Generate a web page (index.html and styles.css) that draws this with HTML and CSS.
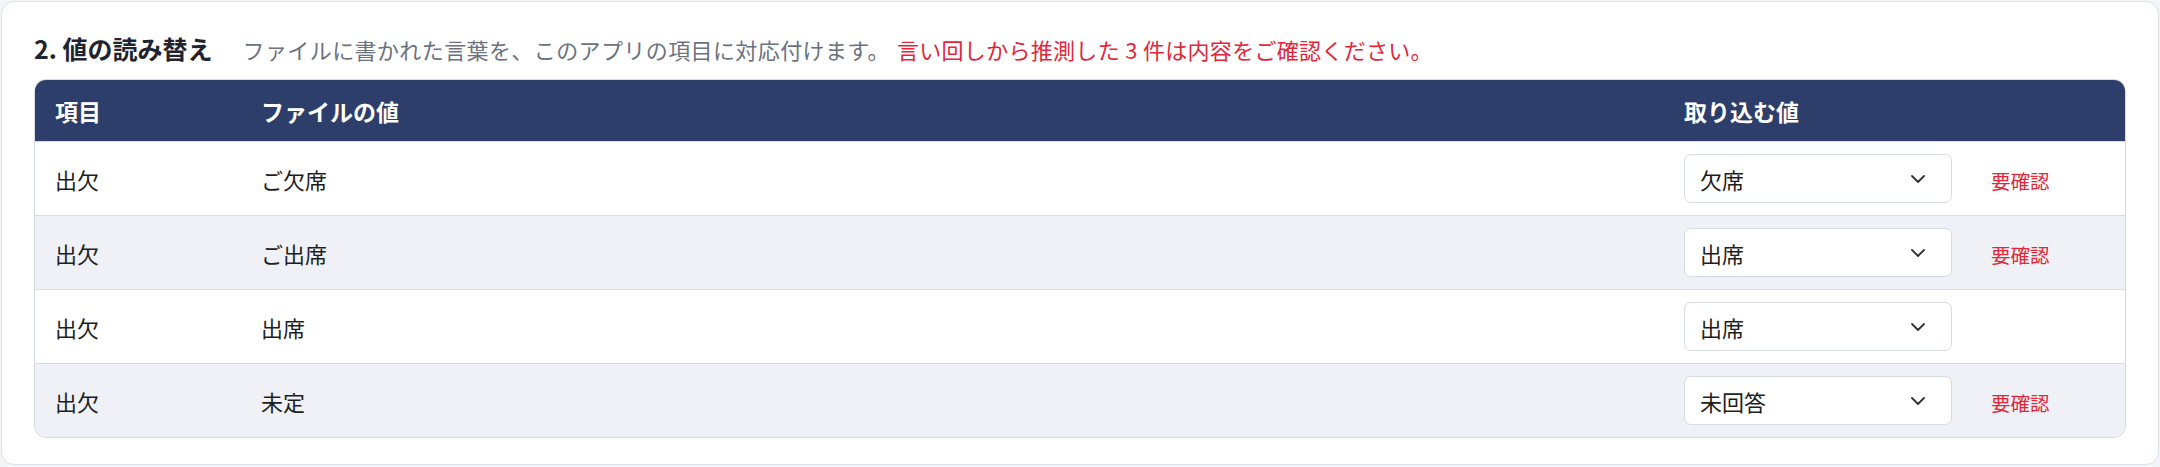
FILE: index.html
```html
<!DOCTYPE html>
<html lang="ja">
<head>
<meta charset="utf-8">
<link rel="stylesheet" href="styles.css">
</head>
<body>
<section class="card">
  <div class="heading">
    <h2 class="title">2. 値の読み替え</h2>
    <p class="desc">ファイルに書かれた言葉を、このアプリの項目に対応付けます。</p>
    <p class="warn">言い回しから推測した 3 件は内容をご確認ください。</p>
  </div>
  <div class="table">
    <div class="row head">
      <div class="cell">項目</div>
      <div class="cell">ファイルの値</div>
      <div class="cell">取り込む値</div>
      <div class="cell"></div>
    </div>
    <div class="row">
      <div class="cell">出欠</div>
      <div class="cell">ご欠席</div>
      <div class="cell"><div class="select"><span>欠席</span><svg class="chev" width="14" height="8" viewBox="0 0 14 8"><path d="M1 1l6 6 6-6" fill="none" stroke="#333" stroke-width="1.8" stroke-linecap="round" stroke-linejoin="round"/></svg></div></div>
      <div class="cell"><span class="tag">要確認</span></div>
    </div>
    <div class="row alt">
      <div class="cell">出欠</div>
      <div class="cell">ご出席</div>
      <div class="cell"><div class="select"><span>出席</span><svg class="chev" width="14" height="8" viewBox="0 0 14 8"><path d="M1 1l6 6 6-6" fill="none" stroke="#333" stroke-width="1.8" stroke-linecap="round" stroke-linejoin="round"/></svg></div></div>
      <div class="cell"><span class="tag">要確認</span></div>
    </div>
    <div class="row">
      <div class="cell">出欠</div>
      <div class="cell">出席</div>
      <div class="cell"><div class="select"><span>出席</span><svg class="chev" width="14" height="8" viewBox="0 0 14 8"><path d="M1 1l6 6 6-6" fill="none" stroke="#333" stroke-width="1.8" stroke-linecap="round" stroke-linejoin="round"/></svg></div></div>
      <div class="cell"></div>
    </div>
    <div class="row alt">
      <div class="cell">出欠</div>
      <div class="cell">未定</div>
      <div class="cell"><div class="select"><span>未回答</span><svg class="chev" width="14" height="8" viewBox="0 0 14 8"><path d="M1 1l6 6 6-6" fill="none" stroke="#333" stroke-width="1.8" stroke-linecap="round" stroke-linejoin="round"/></svg></div></div>
      <div class="cell"><span class="tag">要確認</span></div>
    </div>
  </div>
</section>
</body>
</html>
```

FILE: styles.css
```css
* { box-sizing: border-box; }
html, body { margin: 0; }
body {
  padding: 1px 1px 2px 1px;
  background: #f4f5f9;
  font-family: "Noto Sans CJK JP", "Noto Sans", sans-serif;
  color: #1e1e1e;
}
.card {
  background: #fff;
  border: 1px solid #dde0ea;
  border-radius: 13px;
  padding: 29px 32px 26px 32px;
}
.heading {
  display: flex;
  align-items: baseline;
  height: 34px;
  margin-bottom: 14px;
}
.title {
  margin: 0;
  font-size: 25px;
  font-weight: 700;
  line-height: 34px;
  color: #1f2430;
  white-space: nowrap;
}
.desc {
  margin: 0 0 0 30px;
  font-size: 22px;
  letter-spacing: 0.4px;
  line-height: 34px;
  color: #6b7280;
  white-space: nowrap;
}
.warn {
  margin: 0 0 0 7px;
  font-size: 22px;
  letter-spacing: 0.3px;
  line-height: 34px;
  color: #e0283a;
  white-space: nowrap;
}
.table {
  border: 1px solid #d5d9e4;
  border-radius: 12px;
  overflow: hidden;
}
.row {
  display: grid;
  grid-template-columns: 206px 1fr 308px 153px;
  align-items: center;
  height: 74px;
  border-top: 1px solid #d8dce6;
  background: #fff;
  font-size: 22px;
}
.row.alt { background: #eff1f6; }
.row.head {
  height: 61px;
  border-top: none;
  background: #2d3e6b;
  color: #fff;
  font-weight: 700;
  font-size: 23px;
}
.cell {
  padding: 0 20px;
  white-space: nowrap;
}
.cell:last-child { padding-left: 19px; }
.select {
  display: flex;
  align-items: center;
  justify-content: space-between;
  width: 268px;
  height: 49px;
  padding: 0 26px 0 15px;
  background: #fff;
  border: 1px solid #d6dae3;
  border-radius: 7px;
  font-size: 22px;
  font-weight: 400;
  color: #1e1e1e;
}
.chev { display: block; }
.tag {
  font-size: 19.5px;
  color: #e0283a;
}
```
